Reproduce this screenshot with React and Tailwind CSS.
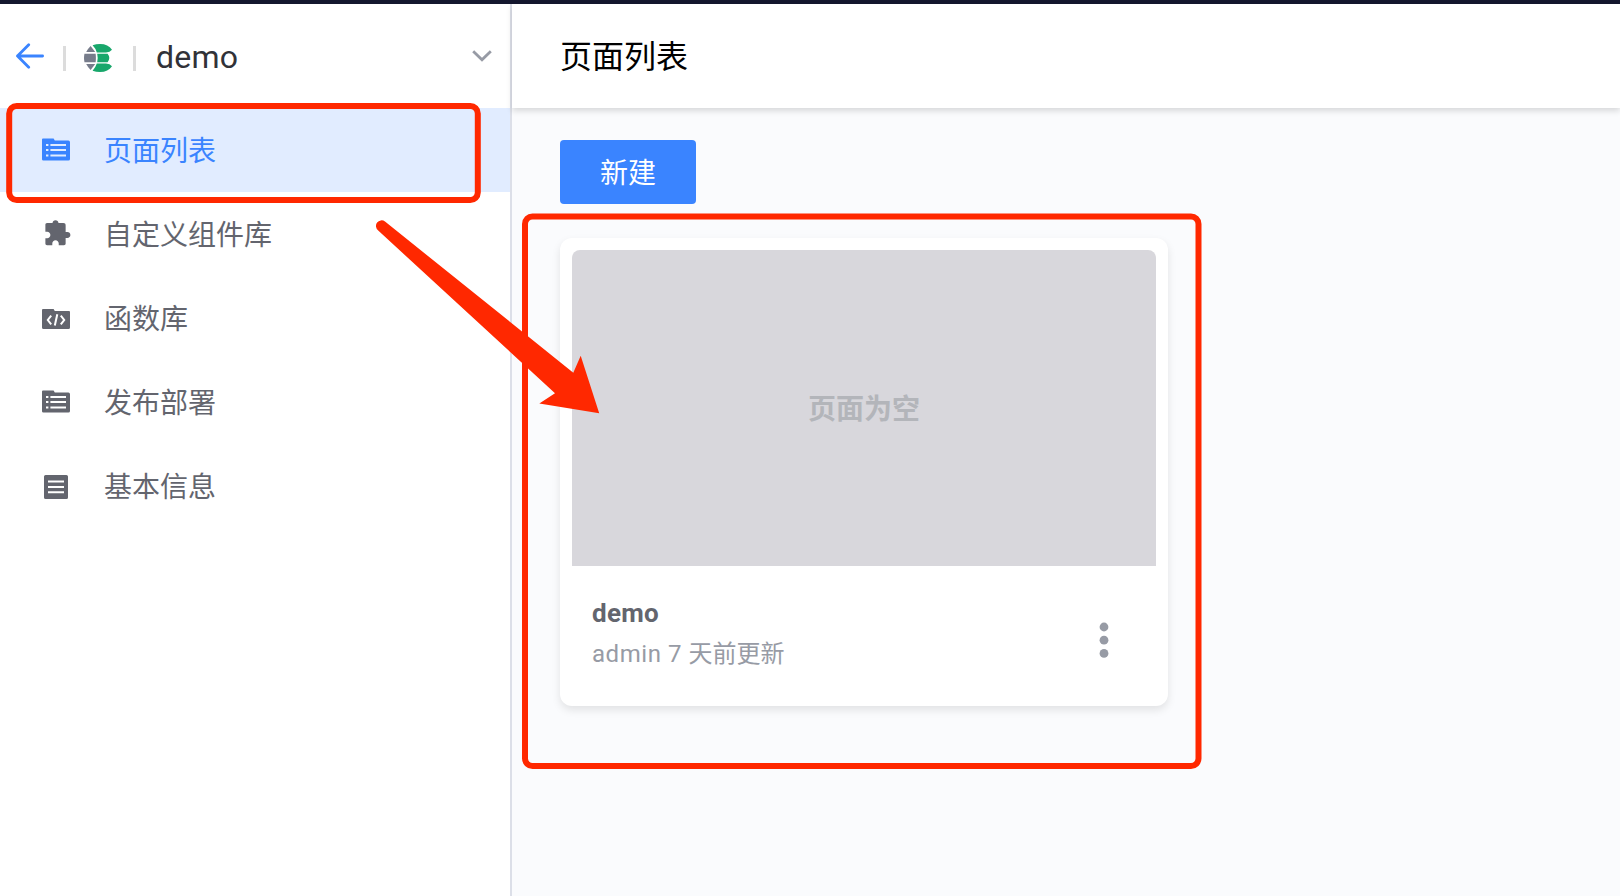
import React from "react";

const font = "font-['Roboto','Noto_Sans_CJK_SC',sans-serif]";

function FolderListIcon() {
  return (
    <svg width="28" height="23" viewBox="0 0 28 23" className="-mt-0.5 block">
      <path
        fill="currentColor"
        fillRule="evenodd"
        d="M1 .6h10.6l1.2 2H26.4a1.6 1.6 0 0 1 1.6 1.6V21a1.6 1.6 0 0 1-1.6 1.6H1.4A1.4 1.4 0 0 1 0 21.200V1.600a1 1 0 0 1 1-1zM4 6v2h2.400V6zM8.400 6v2H24V6zM4 11.100v2h2.400v-2zM8.400 11.100v2H24v-2zM4 16.400v2h2.400v-2zM8.400 16.400v2H24v-2z"
      />
    </svg>
  );
}

function PuzzleIcon() {
  return (
    <svg width="28.600" height="28.600" viewBox="0 0 24 24" className="-mt-px ml-[0.5px] block">
      <path
        fill="currentColor"
        d="M20.500 11H19V5.500C19 4 18.400 3.400 17 3.400h-4C13 2 11.880 1 10.500 1S8 2 8 3.400H3.400C2.500 3.400 2 4 2 4.800v6h1.500c1.490 0 2.700 1.210 2.700 2.700s-1.210 2.700-2.700 2.700H2V20.600c0 .8.600 1.400 1.400 1.400h4.400v-1.500c0-1.490 1.210-2.700 2.700-2.700s2.700 1.210 2.700 2.700V22h4.400c.8 0 1.400-.6 1.400-1.400V16h1.500c1.380 0 2.500-1.120 2.500-2.500S21.880 11 20.500 11z"
      />
    </svg>
  );
}

function FolderCodeIcon() {
  return (
    <svg width="28" height="20" viewBox="0 0 28 20" className="mt-px block">
      <path fill="currentColor" d="M1 0h10.600l1.200 2H27a1 1 0 0 1 1 1v15.500a1.500 1.500 0 0 1-1.500 1.500h-25A1.500 1.500 0 0 1 0 18.500V1a1 1 0 0 1 1-1z" />
      <path fill="none" stroke="#fff" strokeWidth="2" d="M9.200 6.700 5.800 11l3.400 4.300M18.800 6.700l3.400 4.300-3.400 4.300M15.300 5.200l-2.500 11.300" />
    </svg>
  );
}

function ListIcon() {
  return (
    <svg width="24" height="24" viewBox="0 0 24 24" className="ml-[2px] mt-px block">
      <path
        fill="currentColor"
        fillRule="evenodd"
        d="M1.600 0h20.800A1.600 1.600 0 0 1 24 1.600v20.800a1.600 1.600 0 0 1-1.600 1.600H1.600A1.600 1.600 0 0 1 0 22.400V1.600A1.600 1.600 0 0 1 1.600 0zM4 5.500v2h16v-2zM4 11v2h16v-2zM4 16.300v2h16v-2z"
      />
    </svg>
  );
}

function Logo() {
  return (
    <svg width="28" height="28" viewBox="0 0 28 28" className="block">
      <g fill="#777c8b">
        <path d="M2.200 8Q4 4.500 6.600 2L11.200 8z" />
        <path d="M.5 9.800H11.600Q12.200 14 11.600 18.200H.5Q-.5 14 .5 9.800z" />
        <path d="M2.200 20H11.200L6.600 26Q4 23.500 2.200 20z" />
      </g>
      <g fill="#18a76b">
        <path d="M8.600 1.300Q12 0 16 0C21.500 0 25.500 2 28 5.800Q26 8.400 22 8.400H12.800Q11.500 4.300 8.600 1.300z" />
        <path d="M13.200 9.800H23.600Q27 14 23.600 18.200H13.200Q14.200 14 13.200 9.800z" />
        <path d="M8.600 26.700Q12 28 16 28C21.500 28 25.500 26 28 22.200Q26 19.600 22 19.600H12.800Q11.500 23.700 8.600 26.700z" />
      </g>
    </svg>
  );
}

const menu = [
  { label: "页面列表", Icon: FolderListIcon, active: true },
  { label: "自定义组件库", Icon: PuzzleIcon },
  { label: "函数库", Icon: FolderCodeIcon },
  { label: "发布部署", Icon: FolderListIcon },
  { label: "基本信息", Icon: ListIcon },
];

function Sidebar() {
  return (
    <aside className="flex w-[512px] shrink-0 flex-col border-r-2 border-[#dcdfe8] bg-white">
      <div className="flex h-[104px] items-center pl-4 pr-[18px]">
        <svg width="28" height="26" viewBox="0 0 28 26" className="block" fill="none" stroke="#3a84ff" strokeWidth="2.800" strokeLinecap="round" strokeLinejoin="round">
          <path d="M12.700 1.700 1.500 13l11.200 11.300M1.500 13H26.600" />
        </svg>
        <span className="ml-[19px] mt-1 h-[25px] w-[3px] bg-[#dcdcdc]" />
        <span className="ml-[18px] mt-1">
          <Logo />
        </span>
        <span className="ml-[21px] mt-1 h-[25px] w-[3px] bg-[#dcdcdc]" />
        <span className="ml-5 mt-0.5 text-[32px] leading-10 tracking-[0.2px] text-[#313238]">demo</span>
        <svg width="20" height="12" viewBox="0 0 20 12" className="ml-auto block" fill="none" stroke="#979ba5" strokeWidth="2.800">
          <path d="M1.200 1.200 10 9.800l8.800-8.600" />
        </svg>
      </div>
      <nav>
        {menu.map(({ label, Icon, active }) => (
          <a
            key={label}
            className={
              active
                ? "flex h-[84px] items-center bg-[#e1ecff] pl-[42px] text-[#3a84ff]"
                : "flex h-[84px] items-center pl-[42px] text-[#63656e]"
            }
          >
            <span className="w-[62px]">
              <Icon />
            </span>
            <span className="pt-[3px] text-[28px] leading-10">{label}</span>
          </a>
        ))}
      </nav>
    </aside>
  );
}

function PageCard() {
  return (
    <article className="flex h-[468px] w-[608px] flex-col rounded-xl bg-white p-3 shadow-[0_4px_8px_rgba(0,0,0,0.1)]">
      <div className="flex h-[316px] items-center justify-center rounded-t-lg bg-[#d8d7dc] pt-[3px] text-[28px] font-bold text-[#b3b5ba]">
        页面为空
      </div>
      <div className="flex flex-1 items-start justify-between pl-5 pr-[47px] pt-[27px]">
        <div>
          <h3 className="text-[26px] font-bold leading-10 tracking-[0.3px] text-[#63656e]">demo</h3>
          <p className="mt-px text-2xl leading-10 text-[#979ba5]">
            <span className="tracking-[0.55px]">admin 7 </span>天前更新
          </p>
        </div>
        <svg width="10" height="36" viewBox="0 0 10 36" className="mt-[29px] block" fill="#979ba5">
          <circle cx="5" cy="5" r="4.400" />
          <circle cx="5" cy="18.200" r="4.400" />
          <circle cx="5" cy="31.400" r="4.400" />
        </svg>
      </div>
    </article>
  );
}

export default function App() {
  return (
    <div className={`relative flex h-[896px] w-[1620px] flex-col overflow-hidden bg-[#fafbfd] ${font}`}>
      <div className="h-1 shrink-0 bg-[#14172e]" />
      <div className="flex flex-1">
        <Sidebar />
        <main className="flex flex-1 flex-col">
          <header className="flex h-[104px] items-center bg-white pl-12 pt-0.5 text-[32px] text-black shadow-[0_3px_6px_rgba(0,0,0,0.14)]">
            <h1>页面列表</h1>
          </header>
          <div className="flex flex-col items-start gap-[34px] pl-12 pt-8">
            <button className="h-16 w-[136px] rounded bg-[#3a84ff] pt-[3px] text-[28px] text-white">新建</button>
            <PageCard />
          </div>
        </main>
      </div>
      <svg width="1620" height="896" viewBox="0 0 1620 896" className="pointer-events-none absolute inset-0">
        <g fill="none" stroke="#ff2800" strokeWidth="6">
          <rect x="9.200" y="106" width="468.600" height="94" rx="7.500" />
          <rect x="525" y="216.500" width="673.500" height="549.500" rx="7.500" />
        </g>
        <path fill="#ff2800" d="M385 221.500 573.300 372.700 580.700 355.700 599.200 413.300 539.300 403.500 555 393.300 378.200 230.500A5.500 5.500 0 0 1 385 221.500z" />
      </svg>
    </div>
  );
}
